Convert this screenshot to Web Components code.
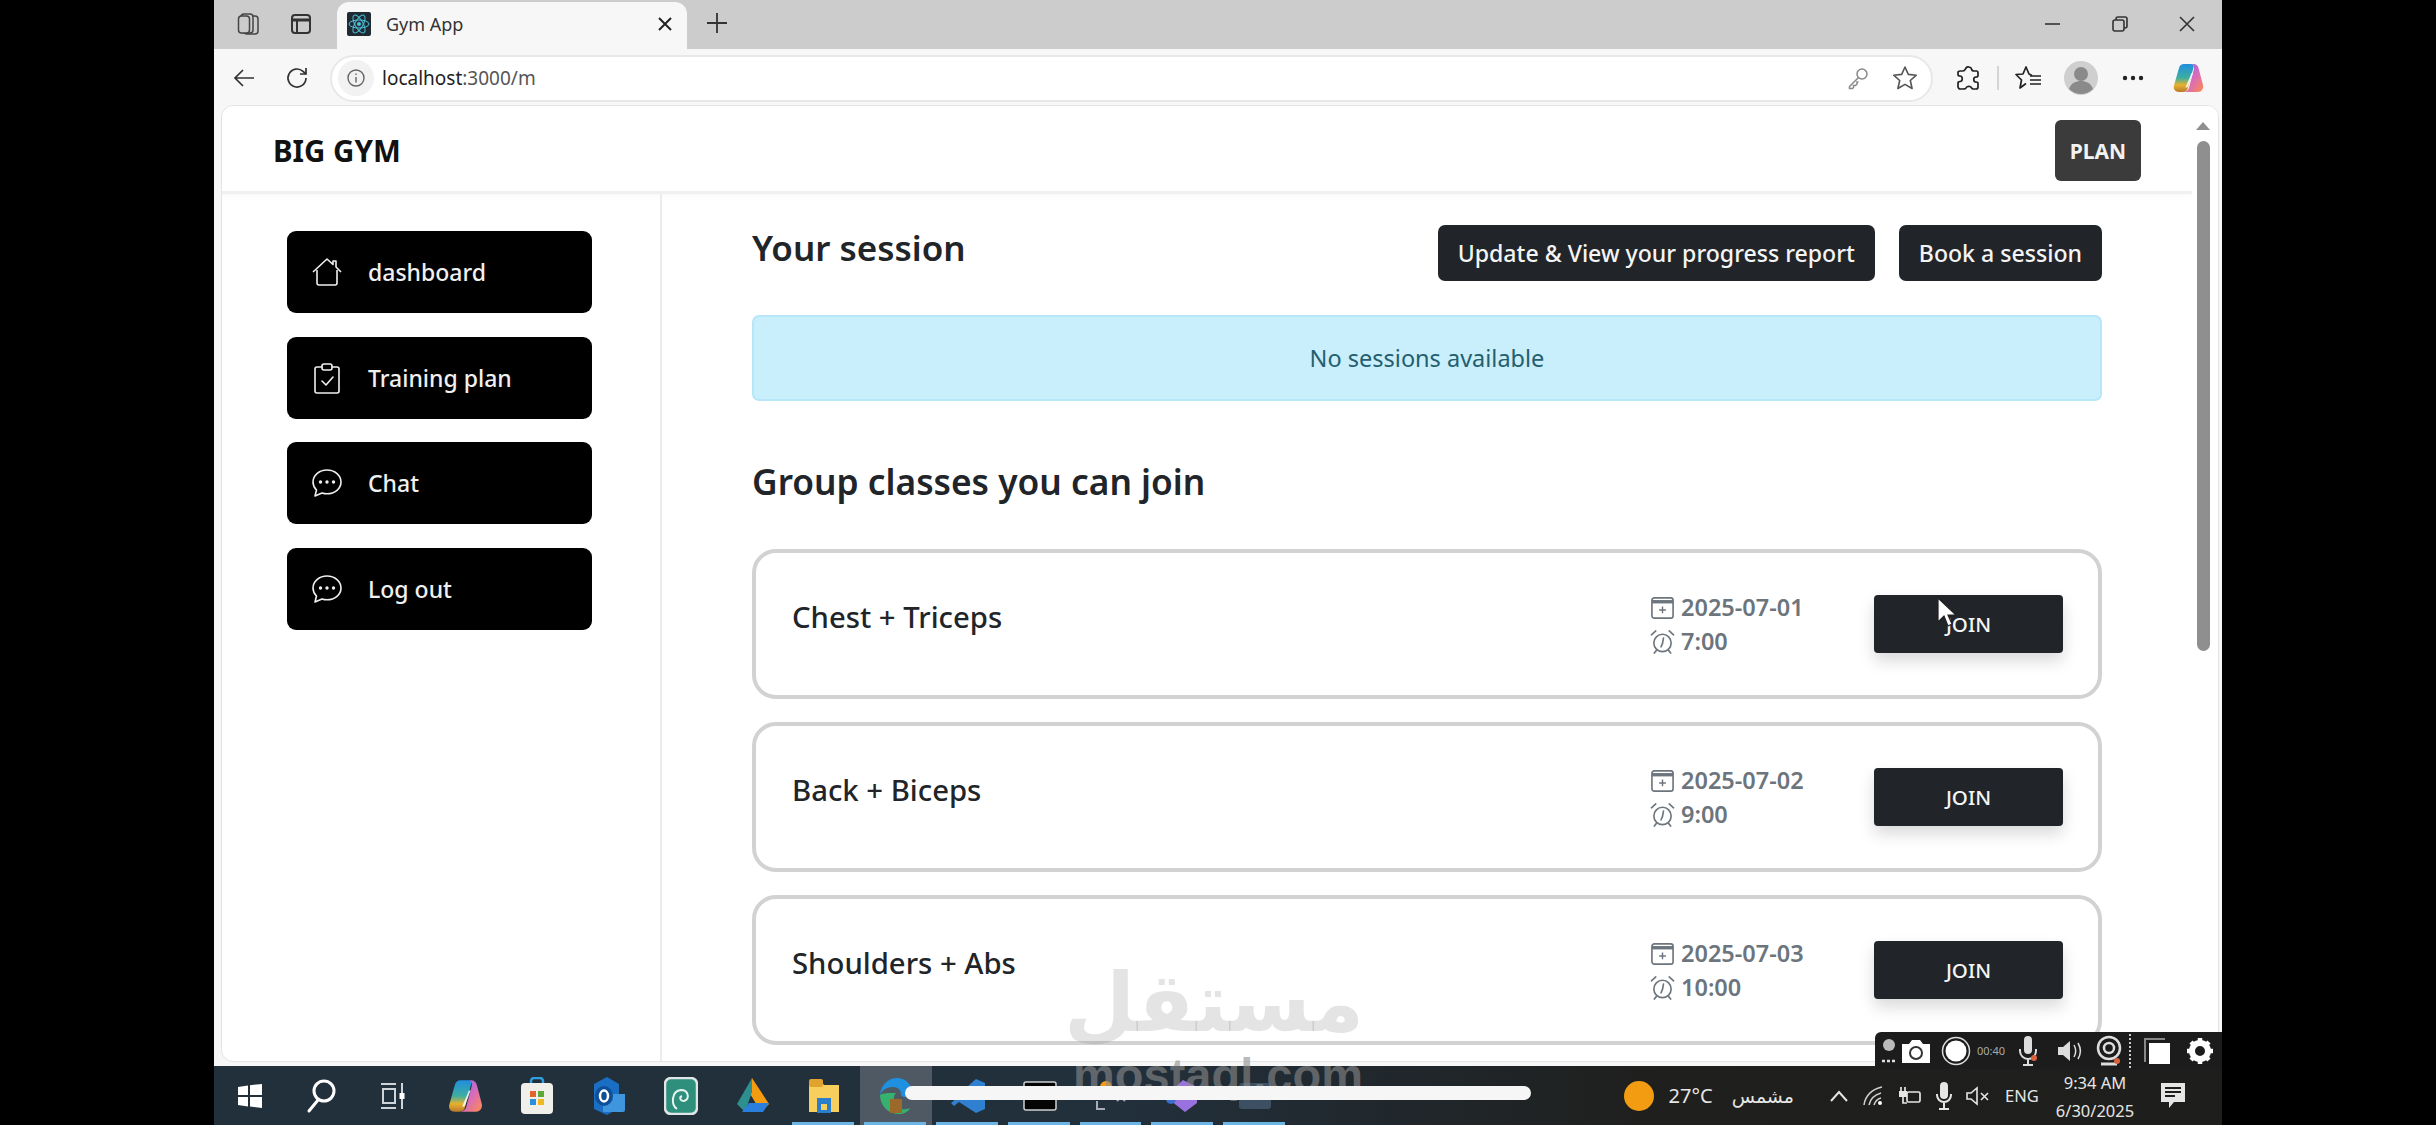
<!DOCTYPE html>
<html lang="en">

<head>
    <meta charset="UTF-8">
    <title>Gym App</title>
    <style>
        html, body { margin: 0; background: #000; overflow: hidden; }
        body { font-family: "Noto Sans", "Open Sans", sans-serif; }
    </style>
</head>

<body>
    <screen-frame>
        <browser-tabs></browser-tabs>
        <browser-toolbar></browser-toolbar>
        <gym-page>
            <gym-header slot="top"></gym-header>
            <side-nav slot="side">
                <nav-item icon="house">dashboard</nav-item>
                <nav-item icon="clipboard">Training plan</nav-item>
                <nav-item icon="chat">Chat</nav-item>
                <nav-item icon="chat">Log out</nav-item>
            </side-nav>
            <session-panel slot="main">
                <class-card date="2025-07-01" time="7:00">Chest + Triceps</class-card>
                <class-card date="2025-07-02" time="9:00">Back + Biceps</class-card>
                <class-card date="2025-07-03" time="10:00">Shoulders + Abs</class-card>
            </session-panel>
        </gym-page>
        <task-bar></task-bar>
        <site-watermark></site-watermark>
        <video-scrubber></video-scrubber>
        <recorder-bar></recorder-bar>
        <mouse-cursor></mouse-cursor>
    </screen-frame>

    <script type="module">
        // icons used in more than one element
        const ICONS = {
            house: `<svg viewBox="0 0 32 32" fill="none" stroke="currentColor" stroke-width="1.6" stroke-linejoin="round"><path d="M2 16 16 3l6 5.5V5h3v6l5 5"/><path d="M6 14v13a2 2 0 0 0 2 2h16a2 2 0 0 0 2-2V14"/></svg>`,
            clipboard: `<svg viewBox="0 0 32 32" fill="none" stroke="currentColor" stroke-width="1.6" stroke-linejoin="round" stroke-linecap="round"><path d="M11 5H6a2 2 0 0 0-2 2v22a2 2 0 0 0 2 2h20a2 2 0 0 0 2-2V7a2 2 0 0 0-2-2h-5"/><rect x="11" y="2" width="10" height="6" rx="2"/><path d="m11 19 4 4 7-8"/></svg>`,
            chat: `<svg viewBox="0 0 32 32" fill="none" stroke="currentColor" stroke-width="1.6" stroke-linejoin="round"><path d="M16 3C8 3 2 8.500 2 15c0 3.500 1.500 6 3.500 8L4 29l7-3c1.500.5 3.200.8 5 .8 8 0 14-5.300 14-11.800S24 3 16 3Z"/><g fill="currentColor" stroke="none"><circle cx="9.500" cy="15" r="1.700"/><circle cx="16" cy="15" r="1.700"/><circle cx="22.500" cy="15" r="1.700"/></g></svg>`,
            calendar: `<svg viewBox="0 0 26 26" fill="none" stroke="currentColor" stroke-width="1.700"><rect x="2" y="3" width="22" height="21" rx="2.500"/><path d="M2 7h22" stroke-width="3.500"/><path d="M13 12v7M9.500 15.500h7" stroke-width="1.500"/></svg>`,
            clock: `<svg viewBox="0 0 26 26" fill="none" stroke="currentColor" stroke-width="1.700" stroke-linecap="round"><circle cx="13" cy="14.500" r="9"/><path d="M14 9.500 13 15l-1.500 3.500M1.500 6 6 2M24.500 6 20 2M6.500 22.500 4.500 25M19.500 22.500l2 2.500"/></svg>`,
            copilot: `<svg viewBox="0 0 34 34"><defs><linearGradient id="cpa" x1="0" y1="0" x2="0" y2="1"><stop offset="0" stop-color="#1f8fe0"/><stop offset=".5" stop-color="#3fae9f"/><stop offset=".75" stop-color="#e8b12f"/><stop offset="1" stop-color="#b9792b"/></linearGradient><linearGradient id="cpb" x1="0" y1="0" x2="1" y2="1"><stop offset="0" stop-color="#7a6cf0"/><stop offset=".5" stop-color="#d66ac0"/><stop offset="1" stop-color="#ff8a50"/></linearGradient></defs><path fill="url(#cpa)" d="M13 3h7c2 0 3 1.500 2.500 3.500L17 27c-.6 2-2 4-5 4H8c-4 0-6-3-5-6.500L8 7c.7-2.500 2.500-4 5-4Z"/><path fill="url(#cpb)" d="M20 3h2.500c2.500 0 4.300 1.500 5 4L32 24c1 3.500-1.500 7-5 7H12c3 0 5-1.500 6-4L23 8c.5-2-.8-5-3-5Z"/><path fill="#fff" opacity=".85" d="M20.500 12h1.500l-5 13.500c-.3.800-1 1-1.500 1h-1Z"/></svg>`
        };

        // creates a custom element with an open shadow root
        function define(name, html, setup) {
            customElements.define(name, class extends HTMLElement {
                constructor() {
                    super();
                    this.attachShadow({ mode: "open" }).innerHTML = html;
                }
                connectedCallback() {
                    if (setup) setup(this, this.shadowRoot);
                }
            });
        }

        define("screen-frame", `
            <style>
                :host { display: flex; flex-direction: column; position: relative; box-sizing: border-box; width: 2008px; height: 1125px; margin-left: 214px; overflow: hidden; background: #f7f7f7; }
            </style>
            <slot></slot>`);

        define("browser-tabs", `
            <style>
                :host { display: flex; align-items: center; flex: none; height: 49px; background: #cccccc; color: #333; font: 18px "Noto Sans", sans-serif; }
                svg { display: block; }
                .btn { width: 52px; display: flex; justify-content: center; flex: none; padding-bottom: 2px; }
                .tab { display: flex; align-items: center; align-self: stretch; width: 350px; box-sizing: border-box; margin-top: 2px; padding: 0 14px 4px 10px; background: #f7f7f7; border-radius: 12px 12px 0 0; }
                .fav { width: 24px; height: 24px; margin-right: 15px; }
                .label { flex: 1; }
                .plus { margin-bottom: 3px; }
                .win { margin-left: auto; display: flex; padding-right: 2px; padding-bottom: 2px; }
                .win div { width: 67px; display: flex; justify-content: center; }
            </style>
            <div style="width:9px"></div>
            <div class="btn"><svg width="26" height="26" viewBox="0 0 26 26" fill="none" stroke="#444" stroke-width="1.500"><rect x="8" y="5" width="14" height="18" rx="3" fill="#ccc"/><rect x="5" y="3" width="12" height="19" rx="3" fill="#ccc"/><rect x="2.500" y="5" width="11" height="17" rx="3" fill="#ccc"/></svg></div>
            <div class="btn"><svg width="24" height="24" viewBox="0 0 24 24" fill="none" stroke="#333" stroke-width="2"><rect x="3" y="3" width="18" height="18" rx="3"/><path d="M3 8h18" stroke-width="3"/><path d="M8 8v13"/></svg></div>
            <div style="width:10px"></div>
            <div class="tab">
                <svg class="fav" viewBox="0 0 24 24"><rect width="24" height="24" rx="2" fill="#1f2a33"/><g fill="none" stroke="#4fc3dc" stroke-width="1"><ellipse cx="12" cy="12" rx="10" ry="4"/><ellipse cx="12" cy="12" rx="10" ry="4" transform="rotate(60 12 12)"/><ellipse cx="12" cy="12" rx="10" ry="4" transform="rotate(120 12 12)"/></g><circle cx="12" cy="12" r="2" fill="#4fc3dc"/></svg>
                <span class="label">Gym App</span>
                <svg width="16" height="16" viewBox="0 0 16 16" stroke="#222" stroke-width="2"><path d="m2 2 12 12M14 2 2 14"/></svg>
            </div>
            <div style="width:19px"></div>
            <svg class="plus" width="22" height="22" viewBox="0 0 22 22" stroke="#333" stroke-width="1.800"><path d="M11 1v20M1 11h20"/></svg>
            <div class="win">
                <div><svg width="18" height="18" viewBox="0 0 18 18" stroke="#333" stroke-width="1.600"><path d="M1 9h15"/></svg></div>
                <div><svg width="18" height="18" viewBox="0 0 18 18" fill="none" stroke="#333" stroke-width="1.600"><rect x="2" y="5" width="11" height="11" rx="2"/><path d="M5 5V4a2 2 0 0 1 2-2h7a2 2 0 0 1 2 2v7a2 2 0 0 1-2 2h-1"/></svg></div>
                <div><svg width="18" height="18" viewBox="0 0 18 18" stroke="#333" stroke-width="1.600"><path d="m2 2 14 14M16 2 2 16"/></svg></div>
            </div>`);

        define("browser-toolbar", `
            <style>
                :host { display: flex; align-items: center; flex: none; height: 56px; padding-top: 2px; box-sizing: border-box; background: #f7f7f7; color: #333; font: 19px "Noto Sans", sans-serif; }
                svg { display: block; flex: none; }
                .bar { display: flex; align-items: center; width: 1603px; height: 47px; margin-left: 8px; box-sizing: border-box; padding: 0 13px 0 10px; background: #fff; border: 2px solid #e8e8e8; border-radius: 24px; }
                .info { width: 36px; height: 36px; border-radius: 50%; background: #f2f2f2; display: flex; align-items: center; justify-content: center; margin-right: 8px; flex: none; margin-left: -4px; }
                .url { flex: 1; color: #555; }
                .url b { font-weight: 400; color: #222; }
                .right { display: flex; align-items: center; }
                .cell { display: flex; justify-content: center; align-items: center; }
                .ext { width: 72px; box-sizing: border-box; }
                .sep { width: 2px; height: 24px; background: #d5d5d5; margin-left: -8px; }
            </style>
            <div class="cell" style="width:56px;padding-left:2px"><svg width="24" height="24" viewBox="0 0 24 24" fill="none" stroke="#333" stroke-width="1.700"><path d="M22 12H3M11 4l-8 8 8 8"/></svg></div>
            <div class="cell" style="width:50px"><svg width="26" height="26" viewBox="0 0 26 26" fill="none" stroke="#333" stroke-width="1.700"><path d="M22 13a9 9 0 1 1-3-6.700L22 9"/><path d="M22 3v6h-6"/></svg></div>
            <div class="bar">
                <div class="info"><svg width="20" height="20" viewBox="0 0 20 20" fill="none" stroke="#666" stroke-width="1.400"><circle cx="10" cy="10" r="8"/><path d="M10 9v5.500M10 5.500v1.600"/></svg></div>
                <span class="url"><b>localhost</b>:3000/m</span>
                <svg width="24" height="24" viewBox="0 0 24 24" fill="none" stroke="#888" stroke-width="1.500" style="margin-right:22px"><circle cx="16" cy="8" r="5"/><path d="m12.500 11.500-9 9v2h3l1-1v-2h2l1.500-1.500v-2h1.500"/></svg>
                <svg width="26" height="26" viewBox="0 0 26 26" fill="none" stroke="#555" stroke-width="1.600" stroke-linejoin="round"><path d="m13 2 3.300 7.400 8 .8-6 5.300 1.800 8L13 19.400 5.900 23.500l1.800-8-6-5.300 8-.8Z"/></svg>
            </div>
            <div class="right">
                <div class="cell ext"><svg width="26" height="26" viewBox="0 0 26 26" fill="none" stroke="#222" stroke-width="1.700" stroke-linejoin="round"><path d="M10 3c1-1.500 5-1.500 5.500 1 .3 1.500 1 2 2.500 2h2.500c1 0 1.500 1 1.500 2v2.500c0 1-1 1.500-2 1.500-3 0-3 5 0 5 1 0 2 .5 2 1.500V22c0 1-.5 2-2 2h-3c-1.500 0-1.500-2-3-2.500-2-.5-4 .5-4 1.500S8 24 6 24H4.500C3 24 2 23 2 21.500V18c0-1 1-1.500 2-1.500 3 0 3-5.500 0-5.500-1 0-2-.5-2-1.500V7.500C2 6.500 3 6 4.500 6H7c2 0 2-1.500 3-3Z"/></svg></div>
                <div class="sep"></div>
                <div class="cell" style="width:60px"><svg width="28" height="26" viewBox="0 0 28 26" fill="none" stroke="#222" stroke-width="1.700" stroke-linejoin="round"><path d="M17 10.500 14 9l-3-7-3 7-7 .5L6.500 15 5 23l6-4.500"/><path d="M15 11h11M15 15h11M15 19h11" stroke-width="1.600"/></svg></div>
                <div class="cell" style="width:43px"><svg width="34" height="34" viewBox="0 0 34 34"><circle cx="17" cy="17" r="17" fill="#cfcfcf"/><circle cx="17" cy="13" r="7" fill="#8a8a8a"/><path d="M5 28c2-6 7-8 12-8s10 2 12 8a17 17 0 0 1-24 0Z" fill="#8a8a8a"/></svg></div>
                <div class="cell" style="width:62px"><svg width="22" height="6" viewBox="0 0 22 6" fill="#222"><circle cx="3" cy="3" r="2.200"/><circle cx="11" cy="3" r="2.200"/><circle cx="19" cy="3" r="2.200"/></svg></div>
                <div class="cell" style="width:48px"><span id="cp" style="width:34px;height:34px;display:block"></span></div>
            </div>`, (el, root) => { root.getElementById("cp").innerHTML = ICONS.copilot; });

        define("gym-page", `
            <style>
                :host { display: flex; flex-direction: column; flex: none; position: relative; height: 957px; margin: 0 3px 0 7px; background: #fff; border: 1px solid #e4e4e4; border-radius: 12px; box-sizing: border-box; overflow: hidden; }
                .row { display: flex; flex: 1; min-height: 0; }
                .side { width: 440px; flex: none; border-right: 2px solid #ececec; box-sizing: border-box; }
                .main { flex: 1; min-width: 0; }
                .track { position: absolute; top: 0; right: 0; bottom: 0; width: 26px; background: #fff; display: flex; flex-direction: column; align-items: center; }
                .up { width: 0; height: 0; border: 7px solid transparent; border-top: 0; border-bottom: 8px solid #8f8f8f; margin: 16px 0 11px; margin-left: -4px; }
                .thumb { width: 13px; height: 510px; border-radius: 7px; background: #8f8f8f; margin-left: -4px; }
            </style>
            <slot name="top"></slot>
            <div class="row">
                <div class="side"><slot name="side"></slot></div>
                <div class="main"><slot name="main"></slot></div>
            </div>
            <div class="track"><div class="up"></div><div class="thumb"></div></div>`);

        define("gym-header", `
            <style>
                :host { display: flex; align-items: center; justify-content: space-between; flex: none; height: 88px; box-sizing: border-box; padding: 4px 51px 0 51px; margin-right: 26px; border-bottom: 3px solid #f0f0f0; box-shadow: 0 1px 4px rgba(0,0,0,.04); }
                .brand { font-size: 29.500px; font-weight: 700; color: #111; }
                .plan { display: flex; align-items: center; justify-content: center; width: 86px; height: 61px; background: #3b3b3b; color: #f2f2f2; font-size: 21px; font-weight: 700; border-radius: 6px; }
            </style>
            <div class="brand">BIG GYM</div>
            <div class="plan">PLAN</div>`);

        define("side-nav", `
            <style>
                :host { display: flex; flex-direction: column; gap: 23.500px; padding: 37px 0 0 65px; }
            </style>
            <slot></slot>`);

        define("nav-item", `
            <style>
                :host { display: flex; align-items: center; box-sizing: border-box; width: 305px; height: 82px; padding-left: 24px; background: #000; color: #f0f0f0; border-radius: 9px; font-size: 23px; font-weight: 500; }
                #icon { width: 32px; height: 32px; margin-right: 25px; flex: none; }
                svg { display: block; }
            </style>
            <span id="icon"></span><slot></slot>`, (el, root) => {
                root.getElementById("icon").innerHTML = ICONS[el.getAttribute("icon")];
            });

        define("dark-button", `
            <style>
                :host { display: inline-flex; align-items: center; justify-content: center; box-sizing: border-box; height: 56px; padding: 0 20px; background: #212529; color: #f4f4f4; border-radius: 7px; font-size: 23.100px; font-weight: 500; white-space: nowrap; }
            </style>
            <slot></slot>`);

        define("session-panel", `
            <style>
                :host { display: flex; flex-direction: column; padding: 31px 0 0 90px; width: 1440px; box-sizing: border-box; color: #212529; }
                .head { display: flex; justify-content: space-between; align-items: flex-start; }
                h2 { margin: 0; font-size: 35px; font-weight: 600; line-height: 46px; }
                .acts { display: flex; gap: 24px; }
                .alert { display: flex; align-items: center; justify-content: center; height: 86px; margin-top: 34px; box-sizing: border-box; background: #c9eefc; border: 2px solid #b6e6f7; border-radius: 7px; color: #245f6e; font-size: 23.500px; }
                .sub { margin-top: 55px; margin-bottom: 43px; line-height: 50px; font-size: 35.300px; }
                .list { display: flex; flex-direction: column; gap: 23px; }
            </style>
            <div class="head">
                <h2>Your session</h2>
                <div class="acts"><dark-button>Update &amp; View your progress report</dark-button><dark-button>Book a session</dark-button></div>
            </div>
            <div class="alert">No sessions available</div>
            <h2 class="sub">Group classes you can join</h2>
            <div class="list"><slot></slot></div>`);

        define("class-card", `
            <style>
                :host { display: flex; align-items: center; box-sizing: border-box; height: 150px; padding: 0 35px 0 36px; border: 4px solid #d2d2d2; border-radius: 24px; background: #fff; color: #212529; }
                .title { flex: 1; align-self: flex-start; margin-top: 43px; font-size: 29.300px; font-weight: 500; line-height: 42px; }
                .when { width: 224px; flex: none; color: #6c757d; font-size: 23.500px; font-weight: 600; line-height: 34px; }
                .line { display: flex; align-items: center; gap: 6px; }
                .ic { width: 25px; height: 25px; flex: none; }
                svg { display: block; }
                .join { display: flex; align-items: center; justify-content: center; width: 189px; height: 58px; background: #212529; color: #f4f4f4; font-size: 20.500px; font-weight: 500; border-radius: 4px; box-shadow: 0 8px 16px rgba(0,0,0,.15); }
            </style>
            <div class="title"><slot></slot></div>
            <div class="when">
                <div class="line"><span class="ic" id="cal"></span><span id="date"></span></div>
                <div class="line"><span class="ic" id="clk"></span><span id="time"></span></div>
            </div>
            <div class="join">JOIN</div>`, (el, root) => {
                root.getElementById("cal").innerHTML = ICONS.calendar;
                root.getElementById("clk").innerHTML = ICONS.clock;
                root.getElementById("date").textContent = el.getAttribute("date");
                root.getElementById("time").textContent = el.getAttribute("time");
            });

        define("task-bar", `
            <style>
                :host { display: flex; align-items: center; flex: none; height: 59px; margin-top: 4px; background: linear-gradient(90deg, #22303c 0%, #22303c 45%, #1f1f1d 72%, #1e1e1c 100%); color: #e6e6e6; font: 20px "Noto Sans", "DejaVu Sans", sans-serif; }
                .apps { display: flex; align-self: stretch; }
                .cell { position: relative; width: 71.800px; display: flex; align-items: center; justify-content: center; flex: none; }
                .cell.run::after { content: ""; position: absolute; left: 4px; right: 6px; bottom: 0; height: 3px; background: #6cb4e4; }
                .cell.on { background: rgba(255,255,255,.2); }
                svg { display: block; }
                .tray { margin-left: auto; display: flex; align-items: center; height: 100%; position: relative; }
                .clock { width: 100px; text-align: center; font-size: 16.500px; line-height: 28px; padding-top: 2px; }
            </style>
            <div class="apps">
                <div class="cell"><svg width="26" height="26" viewBox="0 0 26 26" fill="#fff"><path d="M1 4l10-1.500V12H1ZM13 2.200 25 1v11H13ZM1 14h10v9.500L1 22ZM13 14h12v11l-12-1.500Z"/></svg></div>
                <div class="cell"><svg width="32" height="36" viewBox="0 0 32 36" fill="none" stroke="#fff" stroke-width="3"><circle cx="18" cy="13" r="10"/><path d="M12 22 3 33" stroke-linecap="round"/></svg></div>
                <div class="cell"><svg width="26" height="28" viewBox="0 0 26 28" fill="none" stroke="#cfd4d8" stroke-width="2"><path d="M1 2h15M1 26h15M3 7h12v14H3ZM22 1v26"/><rect x="19.500" y="11" width="5" height="6" fill="#fff" stroke="none"/></svg></div>
                <div class="cell" id="cp"></div>
                <div class="cell"><svg width="34" height="38" viewBox="0 0 34 38"><path d="M11 7V4a3 3 0 0 1 3-3h6a3 3 0 0 1 3 3v3" fill="none" stroke="#2f9fe0" stroke-width="2.500"/><rect x="1" y="6" width="32" height="31" rx="4" fill="#f1efe9"/><rect x="10" y="14" width="6" height="6" fill="#e0662c"/><rect x="18" y="14" width="6" height="6" fill="#5ea836"/><rect x="10" y="22" width="6" height="6" fill="#2a8fdc"/><rect x="18" y="22" width="6" height="6" fill="#f2b81f"/></svg></div>
                <div class="cell"><svg width="36" height="40" viewBox="0 0 36 40"><path d="M16 1 28 8v24l-12 7-13-6V8Z" fill="#1a6fc4"/><path d="M12 18h22v16a2 2 0 0 1-2 2H12Z" fill="#3f96de"/><ellipse cx="13" cy="20" rx="9" ry="10" fill="#0e4f9a"/><ellipse cx="13" cy="20" rx="4" ry="5.500" fill="none" stroke="#fff" stroke-width="2.500"/></svg></div>
                <div class="cell"><svg width="34" height="38" viewBox="0 0 34 38"><rect x="1" y="1" width="32" height="36" rx="6" fill="#2e8f7c" stroke="#dfe7e6" stroke-width="2.500"/><path d="M13 32c-6-4-6-18 4-19 8 0 9 10 3 11-4 .5-5-4-2-5" fill="none" stroke="#e8f3f0" stroke-width="2"/></svg></div>
                <div class="cell"><svg width="34" height="36" viewBox="0 0 34 36"><path d="M17 0 34 26l-8 8L14 14Z" fill="#f39c12"/><path d="M10 34 2 26 17 0v14Z" fill="#2e8f8f"/><path d="M7 34h21l6-9H14Z" fill="#2a7fdc"/></svg></div>
                <div class="cell run"><svg width="34" height="36" viewBox="0 0 34 36"><path d="M2 3h12l3 4h15v27H2Z" fill="#f6cf5c"/><rect x="2" y="1" width="14" height="8" rx="2" fill="#e0a32e"/><rect x="10" y="20" width="14" height="15" fill="#2a7fcc"/><rect x="14" y="26" width="6" height="6" fill="#f6cf5c"/></svg></div>
                <div class="cell run on"><svg width="36" height="38" viewBox="0 0 36 38"><path d="M2 18C3 7 11 1 19 1c9 0 15 7 15 14 0 3-3 5-7 5-3 0-4-1-4-3 0-4-3-7-8-7-6 0-11 3-13 8Z" fill="#1f8fe0"/><path d="M2 18c0 10 8 19 18 19 6 0 10-2 12-6-7 3-15 1-16-7-.5-4 0-6 2-8-7 0-13 0-16 2Z" fill="#35b26e"/><rect x="12" y="22" width="12" height="14" fill="#9b6a2b"/></svg></div>
                <div class="cell run"><svg width="34" height="36" viewBox="0 0 34 36"><path d="M25 1 8 16l-5-4-3 3 6 5-6 5 3 3 5-4 17 11 9-4V5Z" fill="#2f80d0"/></svg></div>
                <div class="cell run"><svg width="34" height="30" viewBox="0 0 34 30"><rect x="1" y="1" width="32" height="28" rx="2" fill="#050505" stroke="#cfcfcf" stroke-width="1.500"/></svg></div>
                <div class="cell run"><svg width="32" height="34" viewBox="0 0 32 34" fill="none" stroke="#aab" stroke-width="2"><path d="M2 22v8h8M22 14l8 8M30 14l-8 8"/><circle cx="11" cy="8" r="6" fill="#f39c12" stroke="none"/></svg></div>
                <div class="cell run"><svg width="36" height="34" viewBox="0 0 36 34"><path d="M18 1 32 8v16l-12 9L6 22V12Z" fill="#9a72e0"/><circle cx="6" cy="20" r="5" fill="#3a6fd0"/></svg></div>
                <div class="cell run"><svg width="34" height="28" viewBox="0 0 34 28"><rect x="1" y="1" width="32" height="26" rx="3" fill="#3d4f63"/></svg></div>
            </div>
            <div class="tray">
                <svg width="32" height="32" viewBox="0 0 32 32" style="margin-right:14px"><circle cx="16" cy="16" r="15" fill="#f39c12"/></svg>
                <span>27°C</span>
                <span lang="ar" dir="rtl" style="margin:0 35px 0 19px;font-size:19px">مشمس</span>
                <svg width="20" height="12" viewBox="0 0 20 12" fill="none" stroke="#e6e6e6" stroke-width="2" style="margin-right:14px"><path d="m2 11 8-9 8 9"/></svg>
                <svg width="20" height="20" viewBox="0 0 20 20" fill="none" stroke="#cfcfcf" stroke-width="1.500" style="margin-right:15px"><path d="M1 19C2 10 9 3 19 1M6 19c1-5 5-10 12-12M11 19c1-3 3-6 7-7"/><circle cx="17" cy="17" r="2" fill="#fff" stroke="none"/></svg>
                <svg width="24" height="20" viewBox="0 0 24 20" fill="none" stroke="#e6e6e6" stroke-width="1.700" style="margin-right:13px"><rect x="9" y="6" width="13" height="10" rx="1.500"/><rect x="1" y="5" width="8" height="6" fill="#e6e6e6" stroke="none"/><path d="M3 1v4M7 1v4M5 11v6h4"/></svg>
                <svg width="18" height="30" viewBox="0 0 18 30" fill="#e6e6e6" style="margin-right:13px"><rect x="5" y="1" width="8" height="17" rx="4"/><path d="M2 13v1a7 7 0 0 0 14 0v-1M9 21v6M4 28h10" fill="none" stroke="#e6e6e6" stroke-width="2"/></svg>
                <svg width="24" height="20" viewBox="0 0 24 20" fill="none" stroke="#e6e6e6" stroke-width="1.600" style="margin-right:15px"><path d="M1 7h4l6-5v16l-6-5H1ZM15 7l7 7M22 7l-7 7"/></svg>
                <span style="font-size:16.500px;width:40px">ENG</span>
                <div class="clock">9:34 AM<br>6/30/2025</div>
                <div style="width:15px"></div>
                <svg width="26" height="28" viewBox="0 0 26 28" style="margin-right:36px"><path d="M1 1h24v19H14l-5 6v-6H1Z" fill="#e6e6e6"/><path d="M5 6h16M5 10h16M5 14h10" stroke="#1e1e1c" stroke-width="2"/></svg>
            </div>`, (el, root) => { root.getElementById("cp").innerHTML = ICONS.copilot.replace('viewBox="0 0 34 34"', 'viewBox="0 0 34 34" width="38" height="38"'); });

        // the overlays below lie on top of the recorded page
        define("site-watermark", `
            <style>
                :host { position: absolute; left: 858px; top: 951px; width: 292px; text-align: center; color: rgba(120,120,120,.2); pointer-events: none; font-family: "DejaVu Sans", sans-serif; }
                .ar { font-size: 82px; font-weight: 700; line-height: 104px; }
                .en { font: 700 47px/40px "Liberation Sans", sans-serif; color: rgba(140,140,140,.6); white-space: nowrap; }
            </style>
            <div class="ar" lang="ar" dir="rtl">مستقل</div>
            <div class="en">mostaql.com</div>`);

        define("video-scrubber", `
            <style>
                :host { position: absolute; left: 691px; top: 1086px; width: 626px; height: 14px; border-radius: 7px; background: #f6f6f6; }
            </style>`);

        define("recorder-bar", `
            <style>
                :host { position: absolute; left: 1661px; top: 1032px; right: 0; height: 37px; display: flex; align-items: center; box-sizing: border-box; padding: 0 8px 0 4px; background: #1c1c1c; border-radius: 6px 0 0 0; color: #aaa; font: 11px "Noto Sans", sans-serif; }
                svg { display: block; flex: none; }
            </style>
            <svg width="20" height="28" viewBox="0 0 20 28"><circle cx="10" cy="8" r="6" fill="#bbb"/><path d="M3 24h3M8 24h3M13 24h3" stroke="#ddd" stroke-width="2.500"/></svg>
            <svg width="30" height="26" viewBox="0 0 30 26" style="margin-left:2px"><path d="M1 6h7l3-4h8l3 4h7v19H1Z" fill="#fff"/><circle cx="15" cy="15" r="6" fill="none" stroke="#333" stroke-width="2"/></svg>
            <svg width="30" height="30" viewBox="0 0 30 30" style="margin-left:10px"><circle cx="15" cy="15" r="13.500" fill="none" stroke="#ddd" stroke-width="1.500"/><circle cx="15" cy="15" r="10.500" fill="#fff"/></svg>
            <span style="margin-left:6px;width:33px">00:40</span>
            <svg width="22" height="32" viewBox="0 0 22 32" fill="#ddd" style="margin-left:11px"><rect x="7" y="1" width="8" height="18" rx="4"/><path d="M3 14v2a8 8 0 0 0 16 0v-2M11 24v5M6 30h10" fill="none" stroke="#ddd" stroke-width="2"/><circle cx="17" cy="23" r="3" fill="#d9623c"/></svg>
            <svg width="28" height="24" viewBox="0 0 28 24" style="margin-left:18px"><path d="M1 8h5l7-6v20l-7-6H1Z" fill="#ddd"/><path d="M17 6c2 3.500 2 8.500 0 12M21 4c3 5 3 11 0 16" fill="none" stroke="#ddd" stroke-width="1.500"/></svg>
            <svg width="26" height="32" viewBox="0 0 26 32" style="margin-left:11px"><circle cx="13" cy="13" r="11" fill="none" stroke="#ddd" stroke-width="2.500"/><circle cx="13" cy="13" r="5" fill="none" stroke="#ddd" stroke-width="2.500"/><path d="M5 29h16" stroke="#ddd" stroke-width="3"/><circle cx="21" cy="26" r="3" fill="#d9623c"/></svg>
            <div style="width:0;height:34px;border-left:2px dotted #ccc;margin:0 13px 0 7px"></div>
            <svg width="26" height="26" viewBox="0 0 26 26"><path d="M1 24V1h20" fill="none" stroke="#888" stroke-width="2"/><rect x="5" y="5" width="21" height="21" fill="#fff"/></svg>
            <svg width="28" height="28" viewBox="0 0 28 28" style="margin-left:16px"><circle cx="14" cy="14" r="8" fill="none" stroke="#fff" stroke-width="6"/><path d="M14 1v5M14 22v5M1 14h5M22 14h5M5 5l3.500 3.500M19.500 19.500 23 23M23 5l-3.500 3.500M8.500 19.500 5 23" stroke="#fff" stroke-width="4.500"/></svg>`);

        define("mouse-cursor", `
            <style>
                :host { position: absolute; left: 1723px; top: 597px; width: 22px; height: 32px; }
                svg { display: block; }
            </style>
            <svg width="22" height="32" viewBox="0 0 22 32"><path d="M1 1v24l6-6 4 10 4-2-4-9h8Z" fill="#fff" stroke="#222" stroke-width="1.200"/></svg>`);
    </script>
</body>

</html>
